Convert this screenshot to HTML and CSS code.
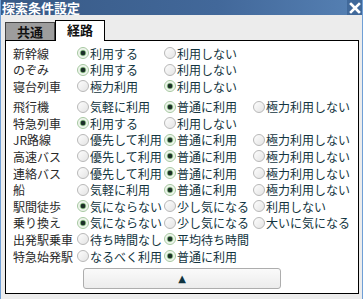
FILE: index.html
```html
<!DOCTYPE html>
<html lang="ja">

<head>
    <meta charset="UTF-8">
    <title>探索条件設定</title>
    <link rel="stylesheet" href="styles.css">
</head>

<body>
    <div class="window">
        <div class="titlebar">
            <span class="title">探索条件設定</span>
            <span class="close">
                <svg width="12" height="12" viewBox="0 0 12 12">
                    <path d="M2 2 L10 10 M10 2 L2 10" stroke="#fff" stroke-width="2.6" stroke-linecap="square" />
                </svg>
            </span>
        </div>

        <div class="tabs">
            <div class="tab">共通</div>
            <div class="tab active">経路</div>
        </div>

        <div class="panel">
            <div class="grid">
                <div class="label">新幹線</div>
                <label class="opt"><input type="radio" name="r1" checked>利用する</label>
                <label class="opt"><input type="radio" name="r1">利用しない</label>
                <div></div>

                <div class="label">のぞみ</div>
                <label class="opt"><input type="radio" name="r2" checked>利用する</label>
                <label class="opt"><input type="radio" name="r2">利用しない</label>
                <div></div>

                <div class="label">寝台列車</div>
                <label class="opt"><input type="radio" name="r3">極力利用</label>
                <label class="opt"><input type="radio" name="r3" checked>利用しない</label>
                <div></div>
            </div>

            <div class="grid second">
                <div class="label">飛行機</div>
                <label class="opt"><input type="radio" name="r4">気軽に利用</label>
                <label class="opt"><input type="radio" name="r4" checked>普通に利用</label>
                <label class="opt"><input type="radio" name="r4">極力利用しない</label>

                <div class="label">特急列車</div>
                <label class="opt"><input type="radio" name="r5" checked>利用する</label>
                <label class="opt"><input type="radio" name="r5">利用しない</label>
                <div></div>

                <div class="label">JR路線</div>
                <label class="opt"><input type="radio" name="r6">優先して利用</label>
                <label class="opt"><input type="radio" name="r6" checked>普通に利用</label>
                <label class="opt"><input type="radio" name="r6">極力利用しない</label>

                <div class="label">高速バス</div>
                <label class="opt"><input type="radio" name="r7">優先して利用</label>
                <label class="opt"><input type="radio" name="r7" checked>普通に利用</label>
                <label class="opt"><input type="radio" name="r7">極力利用しない</label>

                <div class="label">連絡バス</div>
                <label class="opt"><input type="radio" name="r8">優先して利用</label>
                <label class="opt"><input type="radio" name="r8" checked>普通に利用</label>
                <label class="opt"><input type="radio" name="r8">極力利用しない</label>

                <div class="label">船</div>
                <label class="opt"><input type="radio" name="r9">気軽に利用</label>
                <label class="opt"><input type="radio" name="r9" checked>普通に利用</label>
                <label class="opt"><input type="radio" name="r9">極力利用しない</label>

                <div class="label">駅間徒歩</div>
                <label class="opt"><input type="radio" name="r10" checked>気にならない</label>
                <label class="opt"><input type="radio" name="r10">少し気になる</label>
                <label class="opt"><input type="radio" name="r10">利用しない</label>

                <div class="label">乗り換え</div>
                <label class="opt"><input type="radio" name="r11" checked>気にならない</label>
                <label class="opt"><input type="radio" name="r11">少し気になる</label>
                <label class="opt"><input type="radio" name="r11">大いに気になる</label>

                <div class="label">出発駅乗車</div>
                <label class="opt"><input type="radio" name="r12">待ち時間なし</label>
                <label class="opt"><input type="radio" name="r12" checked>平均待ち時間</label>
                <div></div>

                <div class="label">特急始発駅</div>
                <label class="opt"><input type="radio" name="r13">なるべく利用</label>
                <label class="opt"><input type="radio" name="r13" checked>普通に利用</label>
                <div></div>
            </div>

            <button class="collapse-btn">▲</button>
        </div>
    </div>
</body>

</html>
```

FILE: styles.css
```css
html,
body {
    margin: 0;
    padding: 0;
    width: 363px;
    height: 299px;
    overflow: hidden;
}

body {
    font-family: "Noto Sans CJK JP", "Noto Sans", sans-serif;
    font-size: 12px;
    background-color: #ececec;
}

.window {
    box-sizing: border-box;
    height: 299px;
    border-left: 1px solid #6f9fd6;
    border-right: 1px solid #6f9fd6;
}

.titlebar {
    height: 15px;
    display: flex;
    justify-content: space-between;
    align-items: center;
    background: linear-gradient(to right, #385a86, #42689a 60%, #5681b4);
}

.title {
    color: white;
    font-weight: bold;
    font-size: 13px;
    line-height: 15px;
    padding-left: 1px;
}

.close {
    width: 15px;
    height: 15px;
    display: flex;
    align-items: center;
    justify-content: center;
    background-color: #41699a;
}

.tabs {
    display: flex;
    align-items: flex-end;
    height: 20px;
    margin-top: 5px;
    padding-left: 4px;
}

.tab {
    box-sizing: border-box;
    width: 50px;
    height: 18px;
    background-color: #9d9d9d;
    border: 1px solid #444;
    border-bottom: none;
    font-weight: bold;
    font-size: 13px;
    line-height: 17px;
    text-align: center;
    color: #111;
}

.tab.active {
    height: 21px;
    margin-bottom: -1px;
    background-color: white;
    border-color: #000;
    position: relative;
    z-index: 1;
}

.panel {
    box-sizing: border-box;
    width: 354px;
    height: 254px;
    margin-left: 4px;
    background-color: white;
    border: 1px solid #000;
    padding: 4px 0 0 7px;
}

.grid {
    display: grid;
    grid-template-columns: 64px 87px 89px auto;
    grid-auto-rows: 16.6px;
    align-items: center;
}

.grid.second {
    margin-top: 3.6px;
}

.label {
    color: #2a2a2a;
    white-space: nowrap;
}

.opt {
    display: flex;
    align-items: center;
    color: #123440;
    white-space: nowrap;
}

.opt input {
    appearance: none;
    -webkit-appearance: none;
    box-sizing: border-box;
    width: 12px;
    height: 12px;
    margin: 0 1px 0 0;
    border-radius: 50%;
    border: 1px solid #b8b8b8;
    background: linear-gradient(135deg, #fdfdfd, #e4e4e4);
    flex-shrink: 0;
}

.opt input:checked {
    border-color: #a6c8a0;
    background: radial-gradient(circle, #1c2f28 0, #1c2f28 2px, #7fb27a 2.6px, #eaf3e8 3.6px, #fafafa 6px);
}

.collapse-btn {
    display: block;
    box-sizing: border-box;
    width: 198px;
    height: 21px;
    margin: 4px 0 0 70px;
    padding: 0;
    border: 1px solid #adadad;
    border-radius: 3px;
    background: linear-gradient(#fafafa, #ececec);
    color: #0f3440;
    font-family: "DejaVu Sans", sans-serif;
    font-size: 10px;
    line-height: 18px;
}
```
